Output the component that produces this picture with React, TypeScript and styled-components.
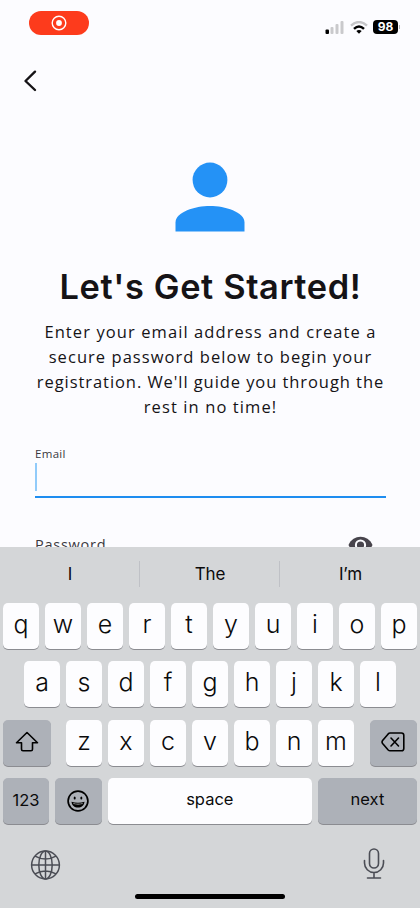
import React from 'react';
import styled, { createGlobalStyle } from 'styled-components';

const GlobalStyle = createGlobalStyle`
  * { box-sizing: border-box; }
  body { margin: 0; background: #fcfcff; font-family: Inter, "Liberation Sans", sans-serif; color: #151316; }
  svg { display: block; flex: none; }
`;

const Screen = styled.div`
  width: 420px;
  height: 908px;
  display: flex;
  flex-direction: column;
  overflow: hidden;
  background: #fcfcff;
`;

const StatusBar = styled.header`
  height: 54px;
  flex: none;
  padding: 11px 20px 0 29px;
  display: flex;
  justify-content: space-between;
  align-items: flex-start;
`;

const RecordingPill = styled.div`
  width: 60px;
  height: 24px;
  border-radius: 12px;
  background: #fd3b1c;
  display: grid;
  place-items: center;
`;

const StatusIcons = styled.div`
  display: flex;
  align-items: center;
  height: 14px;
  margin-top: 9px;
`;

const Signal = styled.svg`
  margin-right: 6px;
`;

const Battery = styled.div`
  width: 25px;
  height: 14px;
  margin-left: 5px;
  border-radius: 4px;
  background: #000;
  color: #fff;
  font-size: 12px;
  font-weight: 700;
  line-height: 14px;
  text-align: center;
`;

const BatteryTip = styled.div`
  width: 1px;
  height: 4px;
  margin-left: 1px;
  background: #b5b5b7;
`;

const NavBar = styled.nav`
  height: 54px;
  flex: none;
  padding: 16px 0 0 23px;
`;

const Form = styled.main`
  height: 439px;
  flex: none;
  overflow: hidden;
  display: flex;
  flex-direction: column;
  align-items: center;
  padding: 54px 34px 0 35px;
`;

const Avatar = styled.svg`
  margin-right: 1px;
`;

const Title = styled.h1`
  margin: 35px 0 0;
  height: 40px;
  flex: none;
  line-height: 40px;
  font-size: 34.4px;
  font-weight: 600;
  letter-spacing: 0.62px;
  white-space: nowrap;
`;

const Intro = styled.p`
  margin: 12px 0 0;
  font-family: "Open Sans", sans-serif;
  font-size: 16.5px;
  line-height: 25px;
  text-align: center;
`;

const IntroLine = styled.span<{ $tracking: number }>`
  display: block;
  white-space: nowrap;
  letter-spacing: ${(p) => p.$tracking}px;
`;

const EmailField = styled.div`
  width: 100%;
  height: 53px;
  flex: none;
  margin-top: 26px;
  border-bottom: 2px solid #1e8df0;
`;

const FieldLabel = styled.label<{ $size: number; $tracking: number }>`
  display: block;
  font-family: "Open Sans", sans-serif;
  font-size: ${(p) => p.$size}px;
  letter-spacing: ${(p) => p.$tracking}px;
  line-height: 18px;
  color: #3a383e;
`;

const Caret = styled.div`
  width: 2px;
  height: 28px;
  background: #91cbfa;
`;

const PasswordField = styled.div`
  width: 100%;
  margin-top: 38px;
  padding-right: 13px;
  display: flex;
  justify-content: space-between;
  align-items: flex-start;
`;

const Keyboard = styled.section`
  flex: 1;
  background: #d4d6d8;
  color: #0a0a0b;
  display: flex;
  flex-direction: column;
`;

const Suggestions = styled.div`
  height: 56px;
  flex: none;
  padding: 14px 0 16px;
  display: grid;
  grid-template-columns: 139px 140px 141px;
`;

const Suggestion = styled.div`
  display: grid;
  place-items: center;
  padding-left: 1px;
  font-size: 17px;
  letter-spacing: -0.1px;
  & + & { border-left: 1px solid #bfc1c6; }
`;

const Rows = styled.div`
  display: flex;
  flex-direction: column;
  gap: 12.4px;
`;

const KeyRow = styled.div<{ $spread?: boolean }>`
  display: flex;
  gap: 6px;
  padding: 0 3px;
  justify-content: ${(p) => (p.$spread ? 'space-between' : 'center')};
`;

const LetterGroup = styled.div`
  display: flex;
  gap: 6px;
`;

const Key = styled.div<{ $width?: number; $dark?: boolean; $small?: boolean; $lift?: number }>`
  width: ${(p) => p.$width ?? 36}px;
  height: 46px;
  flex: none;
  padding-bottom: ${(p) => p.$lift ?? (p.$small ? 2 : 4)}px;
  border-radius: 5px;
  background: ${(p) => (p.$dark ? '#adb1b8' : '#fdfdff')};
  box-shadow: 0 1px 0 #8b8c91;
  display: grid;
  place-items: center;
  font-size: ${(p) => (p.$small ? 16.5 : 25)}px;
  font-weight: ${(p) => (p.$small ? 400 : 300)};
`;

const KeyIcon = styled.svg`
  margin-top: 1px;
`;

const BottomBar = styled.footer`
  padding: 23px 34px 0 30px;
  height: 70px;
  display: flex;
  justify-content: space-between;
`;

const HomeIndicator = styled.div`
  width: 150px;
  height: 5px;
  border-radius: 3px;
  background: #000;
  align-self: center;
`;

const letters = (text: string) => text.split('').map((c) => <Key key={c}>{c}</Key>);

export default function App() {
  return (
    <>
      <GlobalStyle />
      <Screen>
        <StatusBar>
          <RecordingPill>
            <svg width="16" height="16" viewBox="0 0 16 16">
              <circle cx="8" cy="8" r="6.8" fill="none" stroke="#fff" strokeWidth="1.4" />
              <circle cx="8" cy="8" r="2.9" fill="#fff" />
            </svg>
          </RecordingPill>
          <StatusIcons>
            <Signal width="19" height="13" viewBox="0 0 19 13">
              <rect x="0.5" y="8.5" width="3.5" height="4.5" rx="1" fill="#000" />
              <rect x="5.5" y="6" width="3" height="7" rx="1" fill="#c9c9cc" />
              <rect x="10.5" y="3" width="3" height="10" rx="1" fill="#c9c9cc" />
              <rect x="15.5" y="0" width="3" height="13" rx="1" fill="#c9c9cc" />
            </Signal>
            <svg width="18" height="13" viewBox="0 0 18 13" fill="none">
              <path d="M1 4.6Q9-2.5 17 4.6" stroke="#c5c5c8" strokeWidth="2.4" />
              <path d="M4 7.8Q9 3 14 7.8" stroke="#000" strokeWidth="2.4" />
              <path d="M6.3 10.1Q9 8 11.7 10.1L9 12.8Z" fill="#000" />
            </svg>
            <Battery>98</Battery>
            <BatteryTip />
          </StatusIcons>
        </StatusBar>

        <NavBar>
          <svg width="14" height="22" viewBox="0 0 14 22">
            <path d="M12 1.7 2.5 11 12 20" fill="none" stroke="#151316" strokeWidth="2.4" strokeLinecap="round" strokeLinejoin="round" />
          </svg>
        </NavBar>

        <Form>
          <Avatar width="70" height="70" viewBox="0 0 70 70" fill="#2492f6">
            <circle cx="35" cy="18" r="17.4" />
            <path d="M.5 69.5V60.5C.5 50 20 44 35 44S69.500 50 69.500 60.500V69.500Z" />
          </Avatar>
          <Title>Let's Get Started!</Title>
          <Intro>
            <IntroLine $tracking={1.09}>Enter your email address and create a</IntroLine>
            <IntroLine $tracking={1.05}>secure password below to begin your</IntroLine>
            <IntroLine $tracking={0.93}>registration. We'll guide you through the</IntroLine>
            <IntroLine $tracking={1.1}>rest in no time!</IntroLine>
          </Intro>
          <EmailField>
            <FieldLabel $size={11.5} $tracking={0.3}>Email</FieldLabel>
            <Caret />
          </EmailField>
          <PasswordField>
            <FieldLabel $size={14.5} $tracking={0.75}>Password</FieldLabel>
            <svg width="25" height="18" viewBox="0 0 25 18">
              <path d="M.5 9C3 3.500 7.500.8 12.500.8S22 3.500 24.500 9C22 14.500 17.500 17.200 12.500 17.200S3 14.500.5 9Z" fill="#47444c" />
              <circle cx="12.5" cy="9" r="4.600" fill="none" stroke="#fcfcff" strokeWidth="2" />
            </svg>
          </PasswordField>
        </Form>

        <Keyboard>
          <Suggestions>
            <Suggestion>I</Suggestion>
            <Suggestion>The</Suggestion>
            <Suggestion>I’m</Suggestion>
          </Suggestions>
          <Rows>
            <KeyRow>{letters('qwertyuiop')}</KeyRow>
            <KeyRow>{letters('asdfghjkl')}</KeyRow>
            <KeyRow $spread>
              <Key $dark $small $width={47.5}>
                <KeyIcon width="24" height="22" viewBox="0 0 24 22">
                  <path d="M12 1.500 1.500 11.700H6.500V18.300Q6.500 19.800 8 19.800H16Q17.500 19.800 17.500 18.300V11.700H22.500Z" fill="none" stroke="#000" strokeWidth="1.6" strokeLinejoin="round" />
                </KeyIcon>
              </Key>
              <LetterGroup>{letters('zxcvbnm')}</LetterGroup>
              <Key $dark $small $width={47.5}>
                <KeyIcon width="24" height="20" viewBox="0 0 24 20" fill="none" stroke="#000" strokeWidth="1.6" strokeLinecap="round" strokeLinejoin="round">
                  <path d="M9 1H20.500Q22.800 1 22.800 3.300V16.500Q22.800 18.800 20.500 18.800H9Q8 18.800 7.200 18L1.600 11.400Q.5 10 1.600 8.600L7.200 1.900Q8 1 9 1Z" />
                  <path d="m10 6 7.500 8M17.500 6 10 14" />
                </KeyIcon>
              </Key>
            </KeyRow>
            <KeyRow $spread>
              <Key $dark $small $width={46}>123</Key>
              <Key $dark $small $width={46.5}>
                <KeyIcon width="22" height="22" viewBox="0 0 22 22">
                  <circle cx="11" cy="11" r="9.900" fill="none" stroke="#000" strokeWidth="1.700" />
                  <ellipse cx="7.700" cy="8" rx="1" ry="1.500" />
                  <ellipse cx="14.300" cy="8" rx="1" ry="1.500" />
                  <path d="M4.500 11.800Q11 13.500 17.500 11.800C17.200 15.500 14.500 17.600 11 17.600S4.800 15.500 4.500 11.800Z" />
                  <path d="M6.200 13.200Q11 14.300 15.800 13.200L15.500 14Q11 14.900 6.500 14Z" fill="#d4d6d8" />
                </KeyIcon>
              </Key>
              <Key $small $width={204} $lift={4}>space</Key>
              <Key $dark $small $width={99} $lift={4}>next</Key>
            </KeyRow>
          </Rows>
          <BottomBar>
            <svg width="31" height="33" viewBox="0 0 31 33" fill="none" stroke="#4b4d55" strokeWidth="1.500">
              <circle cx="15.500" cy="18" r="13.900" />
              <ellipse cx="15.500" cy="18" rx="6.700" ry="13.900" />
              <path d="M15.500 4.100V31.900M1.600 18H29.400M5 9.200Q15.500 15 26 9.200M5 26.800Q15.500 21 26 26.800" />
            </svg>
            <svg width="24" height="34" viewBox="0 0 24 34" fill="none" stroke="#4b4d55" strokeWidth="1.600" strokeLinecap="round">
              <rect x="7.500" y="2" width="9" height="19" rx="4.500" />
              <path d="M2.500 13.500V16A9.500 9.500 0 0 0 21.500 16V13.500M12 25.500V31M5.500 31H18.500" />
            </svg>
          </BottomBar>
          <HomeIndicator />
        </Keyboard>
      </Screen>
    </>
  );
}
